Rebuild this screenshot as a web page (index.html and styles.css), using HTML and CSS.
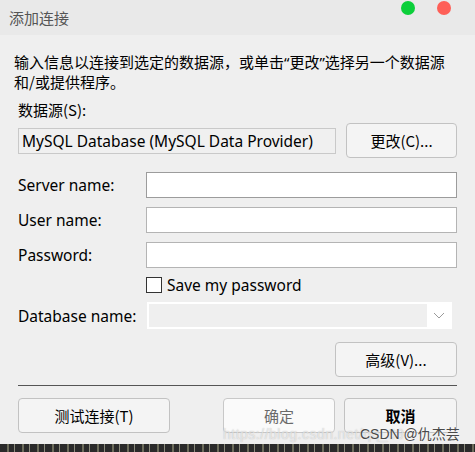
FILE: index.html
```html
<!DOCTYPE html>
<html lang="zh-CN">
<head>
<meta charset="utf-8">
<title>添加连接</title>
<link rel="stylesheet" href="styles.css">
</head>
<body>
<div class="window">
  <div class="titlebar">
    <span class="title">添加连接</span>
    <span class="dot dot-green"></span>
    <span class="dot dot-red"></span>
  </div>
  <div class="content">
    <p class="desc">输入信息以连接到选定的数据源，或单击<span class="q">“</span>更改<span class="q">”</span>选择另一个数据源<br>和/或提供程序。</p>
    <div class="ds-label">数据源(S):</div>
    <div class="ds-row">
      <div class="ds-box">MySQL Database (MySQL Data Provider)</div>
      <button class="btn btn-change">更改(C)...</button>
    </div>
    <div class="form">
      <label class="lbl">Server name:</label>
      <div class="input input-focus"></div>
      <label class="lbl">User name:</label>
      <div class="input"></div>
      <label class="lbl">Password:</label>
      <div class="input"></div>
      <span></span>
      <div class="check-row"><span class="checkbox"></span><span class="check-text">Save my password</span></div>
      <label class="lbl">Database name:</label>
      <div class="combo">
        <div class="combo-field"></div>
        <div class="combo-arrow">
          <svg width="12" height="7" viewBox="0 0 12 7"><path d="M1 1 L6 6 L11 1" fill="none" stroke="#9a9a9a" stroke-width="1"/></svg>
        </div>
      </div>
    </div>
    <div class="adv-row"><button class="btn btn-adv">高级(V)...</button></div>
    <div class="sep"></div>
    <div class="bottom-row">
      <button class="btn btn-test">测试连接(T)</button>
      <div class="bottom-right">
        <button class="btn btn-ok">确定</button>
        <button class="btn btn-cancel">取消</button>
      </div>
    </div>
  </div>
  <div class="watermark">
    <span class="wm-url">https://blog.csdn.net/qq_39</span>
    <span class="wm-csdn">CSDN @仇杰芸</span>
  </div>
  <div class="strip"></div>
</div>
</body>
</html>
```
FILE: styles.css
```css
* { box-sizing: border-box; }
html, body { margin: 0; padding: 0; }
body {
  width: 475px;
  height: 452px;
  overflow: hidden;
  background: #efefef;
  font-family: "Noto Sans", "Noto Sans CJK SC", sans-serif;
  color: #000;
}
.window { position: relative; width: 475px; height: 452px; }
.titlebar {
  height: 35px;
  background: #e9e9e9;
  display: flex;
  align-items: center;
  padding-left: 9px;
}
.title {
  font-family: "Noto Sans CJK SC", sans-serif;
  font-size: 15px;
  color: #555;
}
.dot {
  width: 14px;
  height: 14px;
  border-radius: 50%;
  align-self: flex-start;
  margin-top: 1px;
}
.dot-green { background: #0ccf3a; margin-left: auto; }
.dot-red { background: #fe5f57; margin-left: 22px; margin-right: 24px; }
.content { padding: 0 18px; }
.desc {
  margin: 17px 0 0 -4px;
  font-family: "Noto Sans CJK SC", sans-serif;
  font-size: 15px;
  line-height: 20px;
  white-space: nowrap;
}
.q { font-family: "Noto Sans", sans-serif; }
.ds-label {
  margin-top: 8px;
  font-size: 15px;
  line-height: 20px;
  font-family: "Noto Sans CJK SC", sans-serif;
}
.ds-row {
  margin-top: 3px;
  display: flex;
  align-items: center;
  justify-content: space-between;
}
.ds-box {
  width: 318px;
  height: 26px;
  border: 1px solid #c9c9c9;
  background: #f0f0f0;
  font-size: 15.5px;
  line-height: 24px;
  padding-left: 3px;
  white-space: nowrap;
  overflow: hidden;
}
.btn {
  font-family: "Noto Sans CJK SC", sans-serif;
  font-size: 15px;
  height: 35px;
  border: 1px solid #c2c2c2;
  border-radius: 4px;
  background: #f4f4f4;
  color: #000;
  padding: 0;
}
.btn-change { width: 111px; }
.form {
  margin-top: 14px;
  display: grid;
  grid-template-columns: 128px 1fr;
  row-gap: 9px;
  align-items: center;
}
.lbl { font-size: 15.5px; line-height: 20px; }
.input {
  height: 26px;
  background: #fff;
  border: 1px solid #b4b4b4;
}
.input-focus { border-color: #9c9c9c; }
.check-row { display: flex; align-items: center; height: 16px; }
.checkbox {
  width: 16px;
  height: 16px;
  border: 1px solid #333;
  background: #fff;
}
.check-text { margin-left: 5px; font-size: 15.5px; line-height: 16px; }
.combo {
  margin-left: 1px;
  margin-right: 5px;
  height: 27px;
  background: #fff;
  display: flex;
  padding: 2px;
}
.combo-field { flex: 1; background: #efefef; }
.combo-arrow {
  width: 23px;
  display: flex;
  align-items: center;
  justify-content: center;
}
.adv-row { margin-top: 13px; display: flex; justify-content: flex-end; }
.btn-adv { width: 122px; }
.sep { margin-top: 8px; height: 1px; background: #555; }
.bottom-row {
  margin-top: 12px;
  display: flex;
  justify-content: space-between;
}
.btn-test { width: 152px; }
.bottom-right { display: flex; gap: 9px; }
.btn-ok { width: 112px; background: #fafafa; color: #6a6a6a; border-color: #c8c8c8; }
.btn-cancel { width: 113px; font-weight: bold; }
.watermark {
  position: absolute;
  left: 223px;
  top: 426px;
  width: 240px;
  height: 18px;
  pointer-events: none;
}
.wm-url {
  position: absolute;
  left: 0;
  top: 0;
  font-family: "Liberation Sans", sans-serif;
  font-size: 14px;
  line-height: 16px;
  color: rgba(255,255,255,0.6);
  text-shadow: 0 0 1px rgba(120,120,120,0.5);
  letter-spacing: 0.5px;
}
.wm-csdn {
  position: absolute;
  left: 137px;
  top: 0;
  font-family: "Liberation Sans", "Noto Sans CJK SC", sans-serif;
  font-size: 14px;
  line-height: 17px;
  color: #4a4a4a;
  text-shadow: 0 0 2px #fff;
}
.strip {
  position: absolute;
  left: 0;
  top: 444px;
  width: 475px;
  height: 8px;
  background: repeating-linear-gradient(90deg, #2a2a2a 0 7px, #6b6b5a 7px 9px, #2a2a2a 9px 14px, #8a8a7a 14px 15px);
}
```
